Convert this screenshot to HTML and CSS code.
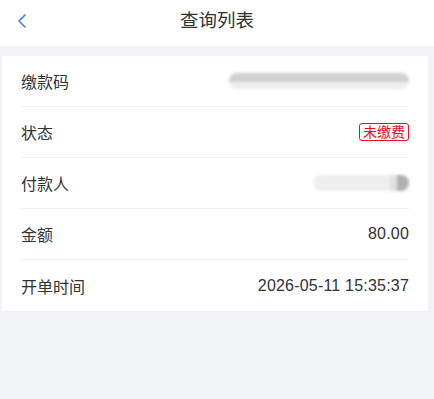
FILE: index.html
```html
<!DOCTYPE html>
<html lang="zh">
<head>
<meta charset="utf-8">
<title>查询列表</title>
<link rel="stylesheet" href="styles.css">
</head>
<body>
<header class="nav">
  <span class="nav-back"><svg width="10" height="16" viewBox="0 0 10 16"><path d="M8.5 1.5 L2 8 L8.5 14.5" fill="none" stroke="#3f84f3" stroke-width="1.6"/></svg></span>
  <h1 class="nav-title">查询列表</h1>
</header>
<main class="card">
  <div class="row"><span class="label">缴款码</span><span class="blur blur-long"></span></div>
  <div class="row"><span class="label">状态</span><span class="tag">未缴费</span></div>
  <div class="row"><span class="label">付款人</span><span class="blur blur-short"></span></div>
  <div class="row"><span class="label">金额</span><span class="value">80.00</span></div>
  <div class="row"><span class="label">开单时间</span><span class="value">2026-05-11 15:35:37</span></div>
</main>
</body>
</html>
```
FILE: styles.css
```css
* { box-sizing: border-box; }
html, body { margin: 0; padding: 0; }
body {
  background: #f2f3f5;
  font-family: "Liberation Sans", "Noto Sans CJK SC", sans-serif;
  color: #323233;
  width: 434px;
  height: 399px;
}
.nav {
  height: 46px;
  background: #fff;
  display: flex;
  align-items: center;
  justify-content: center;
  position: relative;
}
.nav-back {
  position: absolute;
  left: 17px;
  top: 13px;
  display: flex;
}
.nav-title {
  margin: 0;
  font-size: 18.5px;
  font-weight: normal;
  color: #323233;
  line-height: 24px;
  margin-top: -4px;
}
.card {
  background: #fff;
  margin: 10px 6px 0 2px;
  padding: 0 19px;
}
.row {
  height: 51px;
  display: flex;
  align-items: center;
  justify-content: space-between;
  border-bottom: 1px solid #f2f2f2;
  font-size: 16px;
}
.row:last-child { border-bottom: none; }
.label { color: #323233; }
.value { color: #323233; letter-spacing: 0.2px; }
.tag {
  font-size: 14px;
  color: #ee0a24;
  border: 1px solid #ee0a24;
  border-radius: 3px;
  padding: 0 3px;
  line-height: 16px;
}
.blur {
  height: 16px;
  border-radius: 8px;
  filter: blur(1.5px);
}
.blur-long {
  width: 180px;
  background: linear-gradient(to bottom, #d0d0d2 0 55%, #eeeeee 55% 100%);
}
.blur-short {
  width: 96px;
  background: linear-gradient(to right, #eeeeee 0 80%, #e2dfe0 80% 88%, #b0b0b0 88% 100%);
}
```
